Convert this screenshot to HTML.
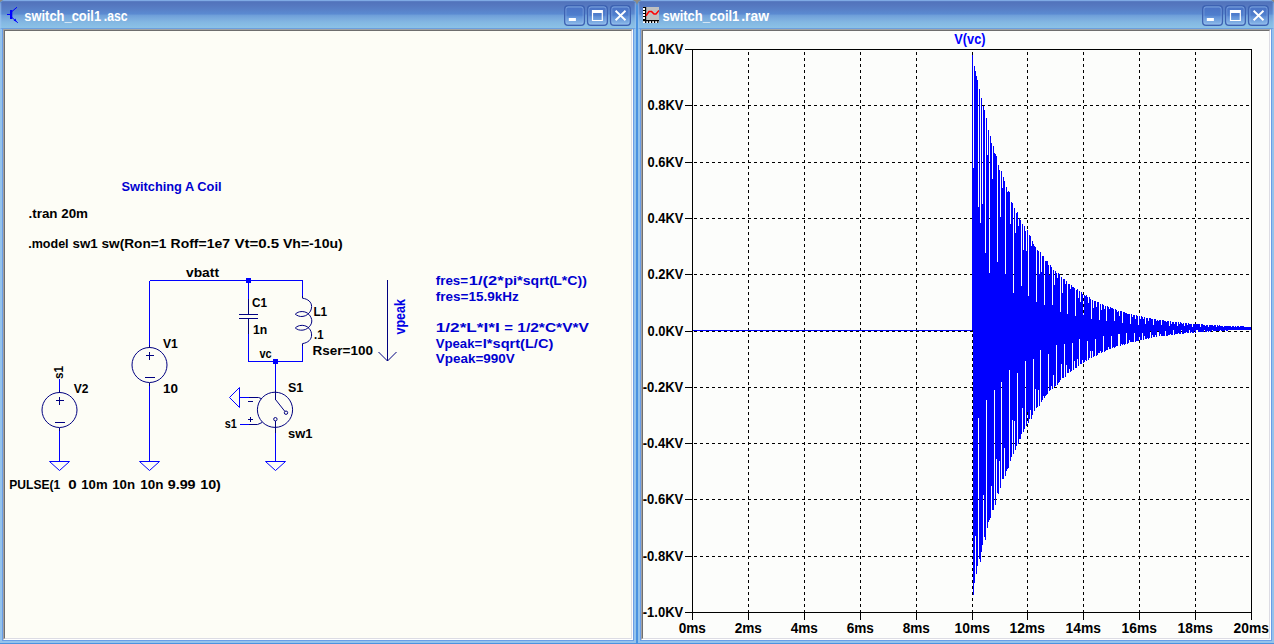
<!DOCTYPE html>
<html><head><meta charset="utf-8"><title>LTspice - switch_coil1</title>
<style>
html,body{margin:0;padding:0;}
body{width:1274px;height:644px;overflow:hidden;background:#8c8a86;position:relative;font-family:"Liberation Sans", sans-serif;}
.win{position:absolute;top:0;height:644px;width:638px;box-sizing:border-box;background:#94c3ec;border:1px solid #4a92e0;border-top:0;border-radius:6px 6px 0 0;overflow:hidden;}
.tb{position:absolute;left:0;right:0;top:0;height:29px;background:linear-gradient(to bottom,#7faae4 0,#7faae4 1px,#5273bb 1.6px,#5577bf 5px,#587fc6 9px,#5b8bd2 14.2px,#6d9dd8 14.9px,#78a9dd 18px,#83b7e2 22px,#8bc1e6 27.5px,#6c9fde 28.2px,#6c9fde 29px);}
.tb::after{content:"";position:absolute;left:0;right:0;top:3px;bottom:0;box-shadow:inset 1.3px 0 0 rgba(160,200,245,.55),inset -1.3px 0 0 rgba(160,200,245,.55);}
.ico{position:absolute;}
.btns{position:absolute;top:5px;left:564.4px;}
.inner{position:absolute;left:2px;right:2px;top:29px;bottom:2px;box-sizing:border-box;border:1px solid #6a9de6;border-top:0;}
.edge{position:absolute;left:0;top:0;right:0;bottom:0;box-sizing:border-box;border-style:solid;border-width:1px;border-color:#a3a3a3 #fff #fff #a3a3a3;}
.edge>div{position:absolute;left:0;top:0;right:0;bottom:0;box-sizing:border-box;border-style:solid;border-width:1px;border-color:#6e6e6e #dcdce4 #dcdce4 #6e6e6e;}
svg.layer{position:absolute;left:0;top:0;}
svg text{font-family:"Liberation Sans", sans-serif;}
</style></head><body>
<div class="win" style="left:-1px"><div class="tb"><svg class="ico" width="16" height="18" viewBox="0 0 16 18" style="left:4px;top:6px"><path d="M3 8.5H6.5" stroke="#00f" stroke-width="1"/><rect x="6" y="4" width="2.3" height="9" fill="#00f"/><path d="M8 5.5L13 1.2M8 11.5L13.8 16.8" stroke="#00f" stroke-width="1"/><path d="M12.5 15.8L9.6 14.4L11.6 12.6Z" fill="#00f"/></svg><svg class="btns" width="67" height="22" viewBox="0 0 67 22"><defs><linearGradient id="bg1" x1="0" y1="0" x2="0" y2="1"><stop offset="0" stop-color="#6c97d9"/><stop offset=".14" stop-color="#4b74c6"/><stop offset=".48" stop-color="#4f7ecd"/><stop offset=".56" stop-color="#6090d7"/><stop offset="1" stop-color="#8fbdea"/></linearGradient></defs><rect x="0.7" y=".7" width="19.7" height="19.6" rx="3.4" fill="url(#bg1)" stroke="#3d62b2" stroke-width="1.4"/><rect x="1.9" y="1.9" width="17.3" height="17.2" rx="2.3" fill="none" stroke="#a6c8f2" stroke-opacity=".45" stroke-width=".9"/><rect x="23.6" y=".7" width="19.7" height="19.6" rx="3.4" fill="url(#bg1)" stroke="#3d62b2" stroke-width="1.4"/><rect x="24.8" y="1.9" width="17.3" height="17.2" rx="2.3" fill="none" stroke="#a6c8f2" stroke-opacity=".45" stroke-width=".9"/><rect x="46.6" y=".7" width="19.7" height="19.6" rx="3.4" fill="url(#bg1)" stroke="#3d62b2" stroke-width="1.4"/><rect x="47.8" y="1.9" width="17.3" height="17.2" rx="2.3" fill="none" stroke="#a6c8f2" stroke-opacity=".45" stroke-width=".9"/><rect x="4.8" y="13" width="7.1" height="3" fill="#fff"/><path d="M27.9 5H38.9V16H27.9Z M29.1 8V14.9H37.7V8Z" fill="#fff" fill-rule="evenodd"/><path d="M51.6 5.7L61.5 15.3M61.5 5.7L51.6 15.3" stroke="#fff" stroke-width="1.9" fill="none"/></svg></div><div class="inner"><div class="edge"><div style="background:#fdfdf6"></div></div></div></div>
<div class="win" style="left:637px"><div class="tb"><svg class="ico" width="16" height="16" viewBox="0 0 16 16" style="left:5px;top:7px"><rect x="0" y="0" width="16" height="16" fill="#fff"/><rect x="3" y="0" width="13" height="13" fill="#c0c0c0"/><rect x="2" y="0" width="1.2" height="16" fill="#000"/><rect x="0" y="13" width="16" height="1.2" fill="#000"/><path d="M0 0.5H2M0 3.5H2M0 6.5H2M0 9.5H2M0 12.5H2" stroke="#000" stroke-width="1.2"/><path d="M2.6 14V16M5.6 14V16M8.6 14V16M11.6 14V16M14.8 14V16" stroke="#000" stroke-width="1.2"/><path d="M3 8.8L6 4.6H8.6L11 7H13L16 3.4" stroke="#f00" stroke-width="1.5" fill="none"/></svg><svg class="btns" width="67" height="22" viewBox="0 0 67 22"><defs><linearGradient id="bg2" x1="0" y1="0" x2="0" y2="1"><stop offset="0" stop-color="#6c97d9"/><stop offset=".14" stop-color="#4b74c6"/><stop offset=".48" stop-color="#4f7ecd"/><stop offset=".56" stop-color="#6090d7"/><stop offset="1" stop-color="#8fbdea"/></linearGradient></defs><rect x="0.7" y=".7" width="19.7" height="19.6" rx="3.4" fill="url(#bg2)" stroke="#3d62b2" stroke-width="1.4"/><rect x="1.9" y="1.9" width="17.3" height="17.2" rx="2.3" fill="none" stroke="#a6c8f2" stroke-opacity=".45" stroke-width=".9"/><rect x="23.6" y=".7" width="19.7" height="19.6" rx="3.4" fill="url(#bg2)" stroke="#3d62b2" stroke-width="1.4"/><rect x="24.8" y="1.9" width="17.3" height="17.2" rx="2.3" fill="none" stroke="#a6c8f2" stroke-opacity=".45" stroke-width=".9"/><rect x="46.6" y=".7" width="19.7" height="19.6" rx="3.4" fill="url(#bg2)" stroke="#3d62b2" stroke-width="1.4"/><rect x="47.8" y="1.9" width="17.3" height="17.2" rx="2.3" fill="none" stroke="#a6c8f2" stroke-opacity=".45" stroke-width=".9"/><rect x="4.8" y="13" width="7.1" height="3" fill="#fff"/><path d="M27.9 5H38.9V16H27.9Z M29.1 8V14.9H37.7V8Z" fill="#fff" fill-rule="evenodd"/><path d="M51.6 5.7L61.5 15.3M61.5 5.7L51.6 15.3" stroke="#fff" stroke-width="1.9" fill="none"/></svg></div><div class="inner"><div class="edge"><div style="background:#fcfdfb"></div></div></div></div>
<svg class="layer" width="1274" height="644" viewBox="0 0 1274 644">
<text y="20.8" font-size="14" font-weight="bold" fill="#fff"><tspan x="24.3" textLength="76.8" lengthAdjust="spacingAndGlyphs">switch_coil1</tspan><tspan x="103.8" textLength="23.7" lengthAdjust="spacingAndGlyphs">.asc</tspan></text>
<text y="20.8" font-size="14" font-weight="bold" fill="#fff"><tspan x="662.5" textLength="76.8" lengthAdjust="spacingAndGlyphs">switch_coil1</tspan><tspan x="741.2" textLength="27.8" lengthAdjust="spacingAndGlyphs">.raw</tspan></text>
<g shape-rendering="crispEdges">
<line x1="149.5" y1="280.5" x2="302.5" y2="280.5" stroke="#0000ff" stroke-width="1"/>
<line x1="149.5" y1="280.5" x2="149.5" y2="344.5" stroke="#0000ff" stroke-width="1"/>
<line x1="149.5" y1="344.5" x2="149.5" y2="347.5" stroke="#000080" stroke-width="1"/>
<line x1="149.5" y1="382.5" x2="149.5" y2="385.5" stroke="#000080" stroke-width="1"/>
<line x1="149.5" y1="385.5" x2="149.5" y2="461" stroke="#0000ff" stroke-width="1"/>
<line x1="145.5" y1="355.5" x2="153.5" y2="355.5" stroke="#000080" stroke-width="1"/>
<line x1="149.5" y1="351.5" x2="149.5" y2="359.5" stroke="#000080" stroke-width="1"/>
<line x1="144.5" y1="377.5" x2="154.5" y2="377.5" stroke="#000080" stroke-width="1"/>
<line x1="59.5" y1="379" x2="59.5" y2="389.5" stroke="#0000ff" stroke-width="1"/>
<line x1="59.5" y1="389.5" x2="59.5" y2="392.5" stroke="#000080" stroke-width="1"/>
<line x1="59.5" y1="427.5" x2="59.5" y2="430.5" stroke="#000080" stroke-width="1"/>
<line x1="59.5" y1="430.5" x2="59.5" y2="461" stroke="#0000ff" stroke-width="1"/>
<line x1="55.5" y1="400.5" x2="63.5" y2="400.5" stroke="#000080" stroke-width="1"/>
<line x1="59.5" y1="396.5" x2="59.5" y2="404.5" stroke="#000080" stroke-width="1"/>
<line x1="54.5" y1="422.5" x2="64.5" y2="422.5" stroke="#000080" stroke-width="1"/>
<line x1="248.5" y1="280.5" x2="248.5" y2="299" stroke="#0000ff" stroke-width="1"/>
<line x1="248.5" y1="299" x2="248.5" y2="314.5" stroke="#000080" stroke-width="1"/>
<line x1="239" y1="314.5" x2="258" y2="314.5" stroke="#000080" stroke-width="1"/>
<line x1="239" y1="318.5" x2="258" y2="318.5" stroke="#000080" stroke-width="1"/>
<line x1="248.5" y1="318.5" x2="248.5" y2="334" stroke="#000080" stroke-width="1"/>
<line x1="248.5" y1="334" x2="248.5" y2="361.5" stroke="#0000ff" stroke-width="1"/>
<line x1="248.5" y1="361.5" x2="302.5" y2="361.5" stroke="#0000ff" stroke-width="1"/>
<line x1="302.5" y1="280.5" x2="302.5" y2="296" stroke="#0000ff" stroke-width="1"/>
<line x1="302.5" y1="346" x2="302.5" y2="361.5" stroke="#0000ff" stroke-width="1"/>
<line x1="275.5" y1="361.5" x2="275.5" y2="389.5" stroke="#0000ff" stroke-width="1"/>
<line x1="275.5" y1="389.5" x2="275.5" y2="399.5" stroke="#000080" stroke-width="1"/>
<line x1="275.5" y1="421" x2="275.5" y2="432.5" stroke="#000080" stroke-width="1"/>
<line x1="275.5" y1="432.5" x2="275.5" y2="461" stroke="#0000ff" stroke-width="1"/>
<line x1="239.5" y1="397.5" x2="249" y2="397.5" stroke="#0000ff" stroke-width="1"/>
<line x1="239.5" y1="424.5" x2="249" y2="424.5" stroke="#0000ff" stroke-width="1"/>
<line x1="248" y1="401.5" x2="253" y2="401.5" stroke="#000080" stroke-width="1"/>
<line x1="248" y1="419.5" x2="253" y2="419.5" stroke="#000080" stroke-width="1"/>
<line x1="250.5" y1="417" x2="250.5" y2="422" stroke="#000080" stroke-width="1"/>
<line x1="387.5" y1="280" x2="387.5" y2="361" stroke="#000080" stroke-width="1"/>
</g>
<g>
<circle cx="149.5" cy="365" r="17.5" stroke="#000080" stroke-width="1" fill="none"/>
<path d="M139.5 461.5H159.5L149.5 470.5Z" stroke="#0000ff" stroke-width="1" fill="none"/>
<circle cx="59.5" cy="410" r="17.5" stroke="#000080" stroke-width="1" fill="none"/>
<path d="M49.5 461.5H69.5L59.5 470.5Z" stroke="#0000ff" stroke-width="1" fill="none"/>
<rect x="246.0" y="278.0" width="5" height="5" fill="#0000ff"/>
<rect x="273.0" y="359.0" width="5" height="5" fill="#0000ff"/>
<path d="M302.5 296V298.2C308 299 311.6 302 311.6 306.5C311.6 310 310 312.5 307.5 314.5C305 316.5 301 317 298.5 316C297 315.4 296 314.8 295.3 314.2C296 313.4 297.5 312.4 299.5 311.8C303 311 307 312 309 314.5C310.8 316.5 311.8 318.8 311.8 321C311.8 324 310 326.5 307.5 328.3C305 330.3 301 330.6 298.5 329.8C297 329.2 296 328.6 295.3 328C296 327.2 297.5 326.2 299.5 325.6C303 324.8 307 325.8 309 328.3C310.8 330.3 311.6 332.5 311.6 335C311.6 339.5 308 342.8 302.5 343.6V346" stroke="#000080" stroke-width="1" fill="none"/>
<circle cx="275" cy="409.8" r="17.6" stroke="#000080" stroke-width="1" fill="none"/>
<path d="M275.5 399.5L284.8 411.3" stroke="#000080" stroke-width="1" fill="none"/>
<circle cx="286" cy="412.7" r="1.7" stroke="#000080" stroke-width="1" fill="none"/>
<circle cx="275.4" cy="419.2" r="1.7" stroke="#000080" stroke-width="1" fill="none"/>
<path d="M265.5 461.5H285.5L275.5 470.5Z" stroke="#0000ff" stroke-width="1" fill="none"/>
<path d="M249 397.5H258.5L261.8 398.8" stroke="#000080" stroke-width="1" fill="none"/>
<path d="M239.5 387.5V407.5L229.5 397.5Z" stroke="#0000ff" stroke-width="1" fill="none"/>
<path d="M249 424.5H257.6L262.3 422.4" stroke="#000080" stroke-width="1" fill="none"/>
<path d="M378.5 352 L387.5 361 L396.5 352" stroke="#000080" stroke-width="1" fill="none"/>
</g>
<g>
<text x="121.5" y="190.5" font-size="12.8" font-weight="bold" fill="#0000d0" textLength="100.0" lengthAdjust="spacingAndGlyphs" xml:space="preserve">Switching A Coil</text>
<text x="28.5" y="217.5" font-size="12.8" font-weight="bold" fill="#000" textLength="59.5" lengthAdjust="spacingAndGlyphs" xml:space="preserve">.tran 20m</text>
<text y="248.3" font-size="12.8" font-weight="bold" fill="#000"><tspan x="28.2" textLength="40.4" lengthAdjust="spacingAndGlyphs">.model</tspan> <tspan x="72.5" textLength="25.2" lengthAdjust="spacingAndGlyphs">sw1</tspan> <tspan x="101.5" textLength="64.8" lengthAdjust="spacingAndGlyphs">sw(Ron=1</tspan> <tspan x="170.6" textLength="59.4" lengthAdjust="spacingAndGlyphs">Roff=1e7</tspan> <tspan x="234.4" textLength="44.8" lengthAdjust="spacingAndGlyphs">Vt=0.5</tspan> <tspan x="282.9" textLength="59.9" lengthAdjust="spacingAndGlyphs">Vh=-10u)</tspan></text>
<text x="186.0" y="276.8" font-size="12.8" font-weight="bold" fill="#000" textLength="33.0" lengthAdjust="spacingAndGlyphs" xml:space="preserve">vbatt</text>
<text x="252.0" y="306.5" font-size="12.8" font-weight="bold" fill="#000" textLength="15.0" lengthAdjust="spacingAndGlyphs" xml:space="preserve">C1</text>
<text x="253.0" y="333.5" font-size="12.8" font-weight="bold" fill="#000" textLength="14.3" lengthAdjust="spacingAndGlyphs" xml:space="preserve">1n</text>
<text x="313.4" y="315.6" font-size="12.8" font-weight="bold" fill="#000" textLength="13.8" lengthAdjust="spacingAndGlyphs" xml:space="preserve">L1</text>
<text x="314.0" y="338.8" font-size="12.8" font-weight="bold" fill="#000" textLength="9.5" lengthAdjust="spacingAndGlyphs" xml:space="preserve">.1</text>
<text x="312.6" y="354.6" font-size="12.8" font-weight="bold" fill="#000" textLength="60.4" lengthAdjust="spacingAndGlyphs" xml:space="preserve">Rser=100</text>
<text x="259.4" y="357.7" font-size="12.8" font-weight="bold" fill="#000" textLength="12.2" lengthAdjust="spacingAndGlyphs" xml:space="preserve">vc</text>
<text x="163.0" y="348.0" font-size="12.8" font-weight="bold" fill="#000" textLength="14.8" lengthAdjust="spacingAndGlyphs" xml:space="preserve">V1</text>
<text x="163.0" y="392.7" font-size="12.8" font-weight="bold" fill="#000" textLength="15.0" lengthAdjust="spacingAndGlyphs" xml:space="preserve">10</text>
<text x="73.8" y="393.0" font-size="12.8" font-weight="bold" fill="#000" textLength="14.7" lengthAdjust="spacingAndGlyphs" xml:space="preserve">V2</text>
<text x="288.0" y="392.4" font-size="12.8" font-weight="bold" fill="#000" textLength="15.3" lengthAdjust="spacingAndGlyphs" xml:space="preserve">S1</text>
<text x="288.0" y="437.9" font-size="12.8" font-weight="bold" fill="#000" textLength="24.4" lengthAdjust="spacingAndGlyphs" xml:space="preserve">sw1</text>
<text x="224.7" y="428.4" font-size="12.8" font-weight="bold" fill="#000" textLength="12.1" lengthAdjust="spacingAndGlyphs" xml:space="preserve">s1</text>
<text y="488.5" font-size="12.8" font-weight="bold" fill="#000"><tspan x="9.3" textLength="50.9" lengthAdjust="spacingAndGlyphs">PULSE(1</tspan>  <tspan x="68.3" textLength="8.4" lengthAdjust="spacingAndGlyphs">0</tspan> <tspan x="81.3" textLength="26.3" lengthAdjust="spacingAndGlyphs">10m</tspan> <tspan x="112.2" textLength="22.9" lengthAdjust="spacingAndGlyphs">10n</tspan> <tspan x="140.2" textLength="23.2" lengthAdjust="spacingAndGlyphs">10n</tspan> <tspan x="167.7" textLength="27.9" lengthAdjust="spacingAndGlyphs">9.99</tspan> <tspan x="200.2" textLength="20.7" lengthAdjust="spacingAndGlyphs">10)</tspan></text>
<g transform="translate(63,379) rotate(-90)"><text x="0.0" y="0.0" font-size="12.8" font-weight="bold" fill="#000" textLength="13.0" lengthAdjust="spacingAndGlyphs" xml:space="preserve">s1</text></g>
<g transform="translate(404.5,334.5) rotate(-90)"><text x="0.0" y="0.0" font-size="14.2" font-weight="bold" fill="#0000e6" textLength="35.5" lengthAdjust="spacingAndGlyphs" xml:space="preserve">vpeak</text></g>
<text y="285.0" font-size="12.8" font-weight="bold" fill="#0000d0"><tspan x="435.8" textLength="32.3" lengthAdjust="spacingAndGlyphs">fres=</tspan><tspan x="468.8" textLength="34.8" lengthAdjust="spacingAndGlyphs">1/(2*</tspan><tspan x="504.2" textLength="18.6" lengthAdjust="spacingAndGlyphs">pi*</tspan><tspan x="522.8" textLength="31.1" lengthAdjust="spacingAndGlyphs">sqrt(</tspan><tspan x="553.2" textLength="33.7" lengthAdjust="spacingAndGlyphs">L*C))</tspan></text>
<text y="300.8" font-size="12.8" font-weight="bold" fill="#0000d0"><tspan x="435.8" textLength="83.0" lengthAdjust="spacingAndGlyphs">fres=15.9kHz</tspan></text>
<text y="331.8" font-size="12.8" font-weight="bold" fill="#0000d0"><tspan x="435.8" textLength="64.0" lengthAdjust="spacingAndGlyphs">1/2*L*I*I</tspan> <tspan x="504.2" textLength="8.7" lengthAdjust="spacingAndGlyphs">=</tspan> <tspan x="517.3" textLength="71.6" lengthAdjust="spacingAndGlyphs">1/2*C*V*V</tspan></text>
<text y="347.6" font-size="12.8" font-weight="bold" fill="#0000d0"><tspan x="435.8" textLength="46.3" lengthAdjust="spacingAndGlyphs">Vpeak=</tspan><tspan x="482.8" textLength="70.5" lengthAdjust="spacingAndGlyphs">I*sqrt(L/C)</tspan></text>
<text y="363.4" font-size="12.8" font-weight="bold" fill="#0000d0"><tspan x="435.8" textLength="78.9" lengthAdjust="spacingAndGlyphs">Vpeak=990V</tspan></text>
</g>
<g shape-rendering="crispEdges">
<line x1="748.5" y1="50" x2="748.5" y2="612" stroke="#000" stroke-width="1" stroke-dasharray="3 3" stroke-dashoffset="-2"/>
<line x1="804.5" y1="50" x2="804.5" y2="612" stroke="#000" stroke-width="1" stroke-dasharray="3 3" stroke-dashoffset="-2"/>
<line x1="860.5" y1="50" x2="860.5" y2="612" stroke="#000" stroke-width="1" stroke-dasharray="3 3" stroke-dashoffset="-2"/>
<line x1="916.5" y1="50" x2="916.5" y2="612" stroke="#000" stroke-width="1" stroke-dasharray="3 3" stroke-dashoffset="-2"/>
<line x1="972.5" y1="50" x2="972.5" y2="612" stroke="#000" stroke-width="1" stroke-dasharray="3 3" stroke-dashoffset="-2"/>
<line x1="1027.5" y1="50" x2="1027.5" y2="612" stroke="#000" stroke-width="1" stroke-dasharray="3 3" stroke-dashoffset="-2"/>
<line x1="1083.5" y1="50" x2="1083.5" y2="612" stroke="#000" stroke-width="1" stroke-dasharray="3 3" stroke-dashoffset="-2"/>
<line x1="1139.5" y1="50" x2="1139.5" y2="612" stroke="#000" stroke-width="1" stroke-dasharray="3 3" stroke-dashoffset="-2"/>
<line x1="1195.5" y1="50" x2="1195.5" y2="612" stroke="#000" stroke-width="1" stroke-dasharray="3 3" stroke-dashoffset="-2"/>
<line x1="693" y1="105.5" x2="1251" y2="105.5" stroke="#000" stroke-width="1" stroke-dasharray="3 3" stroke-dashoffset="-1"/>
<line x1="693" y1="162.5" x2="1251" y2="162.5" stroke="#000" stroke-width="1" stroke-dasharray="3 3" stroke-dashoffset="-1"/>
<line x1="693" y1="218.5" x2="1251" y2="218.5" stroke="#000" stroke-width="1" stroke-dasharray="3 3" stroke-dashoffset="-1"/>
<line x1="693" y1="274.5" x2="1251" y2="274.5" stroke="#000" stroke-width="1" stroke-dasharray="3 3" stroke-dashoffset="-1"/>
<line x1="693" y1="331.5" x2="1251" y2="331.5" stroke="#000" stroke-width="1" stroke-dasharray="3 3" stroke-dashoffset="-1"/>
<line x1="693" y1="387.5" x2="1251" y2="387.5" stroke="#000" stroke-width="1" stroke-dasharray="3 3" stroke-dashoffset="-1"/>
<line x1="693" y1="443.5" x2="1251" y2="443.5" stroke="#000" stroke-width="1" stroke-dasharray="3 3" stroke-dashoffset="-1"/>
<line x1="693" y1="499.5" x2="1251" y2="499.5" stroke="#000" stroke-width="1" stroke-dasharray="3 3" stroke-dashoffset="-1"/>
<line x1="693" y1="556.5" x2="1251" y2="556.5" stroke="#000" stroke-width="1" stroke-dasharray="3 3" stroke-dashoffset="-1"/>
<path d="M972.5 54.6V329.7M973.5 168.0V595.2M974.5 66.1V582.8M975.5 70.9V535.8M976.5 75.6V574.3M977.5 80.3V566.0M978.5 206.5V418.1M979.5 89.3V558.8M980.5 222.7V562.2M981.5 98.0V552.2M982.5 203.9V544.5M983.5 106.3V495.1M984.5 110.4V537.4M985.5 253.4V540.2M986.5 118.3V399.5M987.5 155.2V528.4M988.5 130.1V521.9M989.5 273.2V519.6M990.5 136.1V518.1M991.5 142.8V486.3M992.5 179.2V510.1M993.5 145.5V510.1M994.5 153.4V389.5M995.5 154.3V504.9M996.5 155.9V459.3M997.5 261.8V492.6M998.5 164.5V494.4M999.5 169.5V460.6M1000.5 216.5V487.7M1001.5 170.9V382.1M1002.5 187.9V479.4M1003.5 177.1V478.6M1004.5 180.7V447.6M1005.5 273.5V475.5M1006.5 186.7V470.9M1007.5 192.0V468.5M1008.5 190.8V467.8M1009.5 192.2V369.9M1010.5 223.7V460.8M1011.5 201.9V457.1M1012.5 203.4V420.2M1013.5 292.9V454.2M1014.5 208.1V420.9M1015.5 232.8V450.2M1016.5 212.8V445.6M1017.5 212.4V372.6M1018.5 225.5V443.5M1019.5 218.0V439.1M1020.5 219.6V439.4M1021.5 285.9V433.8M1022.5 224.4V407.7M1023.5 250.1V431.5M1024.5 226.3V428.6M1025.5 230.8V360.8M1026.5 250.9V426.3M1027.5 230.2V412.0M1028.5 296.2V423.0M1029.5 234.9V418.8M1030.5 235.7V409.5M1031.5 246.2V418.6M1032.5 241.1V415.3M1033.5 243.8V358.6M1034.5 245.6V410.9M1035.5 246.5V389.2M1036.5 302.4V407.8M1037.5 250.3V406.7M1038.5 251.3V390.0M1039.5 274.2V406.4M1040.5 252.3V350.4M1041.5 271.9V401.8M1042.5 255.9V399.7M1043.5 255.7V396.0M1044.5 304.8V398.2M1045.5 260.7V395.7M1046.5 261.2V395.0M1047.5 260.9V393.5M1048.5 264.5V353.8M1049.5 275.1V391.0M1050.5 265.4V389.5M1051.5 266.6V386.4M1052.5 305.1V389.2M1053.5 269.5V375.0M1054.5 285.2V387.2M1055.5 270.9V386.1M1056.5 272.5V345.2M1057.5 278.4V384.5M1058.5 273.2V383.0M1059.5 274.3V381.9M1060.5 312.4V380.4M1061.5 277.4V364.2M1062.5 292.9V377.9M1063.5 279.4V377.9M1064.5 278.8V344.2M1065.5 283.8V376.8M1066.5 280.6V365.0M1067.5 314.3V373.4M1068.5 283.9V372.5M1069.5 283.8V369.0M1070.5 288.8V371.5M1071.5 285.4V371.3M1072.5 287.3V343.1M1073.5 286.5V369.7M1074.5 287.5V361.1M1075.5 316.4V368.2M1076.5 289.7V367.5M1077.5 289.3V358.5M1078.5 298.4V366.3M1079.5 291.2V339.1M1080.5 302.0V363.6M1081.5 292.2V364.0M1082.5 294.1V359.7M1083.5 314.7V362.5M1084.5 295.0V361.7M1085.5 296.0V360.3M1086.5 295.3V360.6M1087.5 296.6V340.6M1088.5 303.2V359.8M1089.5 297.3V358.3M1090.5 298.6V351.2M1091.5 319.2V357.7M1092.5 299.7V351.3M1093.5 307.6V357.0M1094.5 300.6V355.9M1095.5 300.8V338.8M1096.5 306.7V355.5M1097.5 301.9V354.5M1098.5 302.4V353.4M1099.5 319.8V353.1M1100.5 303.9V350.6M1101.5 310.2V352.6M1102.5 304.0V352.2M1103.5 304.9V336.2M1104.5 308.9V351.6M1105.5 306.0V350.9M1106.5 321.4V350.2M1107.5 306.1V350.0M1108.5 306.7V347.3M1109.5 308.7V349.2M1110.5 307.4V348.9M1111.5 307.9V335.5M1112.5 308.3V348.1M1113.5 308.7V346.5M1114.5 321.3V347.7M1115.5 309.0V346.8M1116.5 309.7V345.5M1117.5 311.7V346.0M1118.5 310.7V334.1M1119.5 315.7V333.5M1120.5 311.4V345.5M1121.5 311.1V343.8M1122.5 323.3V344.9M1123.5 311.9V344.2M1124.5 312.0V344.5M1125.5 312.8V344.2M1126.5 312.9V333.4M1127.5 313.9V343.5M1128.5 313.6V342.9M1129.5 313.7V339.6M1130.5 323.9V342.3M1131.5 314.1V341.9M1132.5 316.7V341.9M1133.5 315.0V341.6M1134.5 314.9V332.7M1135.5 318.9V341.5M1136.5 315.3V341.2M1137.5 315.9V340.6M1138.5 324.7V340.7M1139.5 316.3V337.0M1140.5 318.7V340.3M1141.5 316.4V339.7M1142.5 317.0V332.6M1143.5 318.8V339.5M1144.5 317.4V336.0M1145.5 324.3V339.0M1146.5 317.8V339.0M1147.5 317.7V337.6M1148.5 320.9V338.6M1149.5 318.4V338.4M1150.5 318.4V331.3M1151.5 318.5V338.1M1152.5 318.8V335.1M1153.5 325.0V337.4M1154.5 319.2V337.2M1155.5 319.4V334.9M1156.5 321.4V336.9M1157.5 319.5V330.9M1158.5 321.2V330.7M1159.5 319.9V336.3M1160.5 320.1V333.9M1161.5 325.3V336.2M1162.5 320.4V336.1M1163.5 320.3V335.8M1164.5 320.5V335.8M1165.5 320.7V331.0M1166.5 322.4V335.5M1167.5 321.0V335.5M1168.5 321.2V334.6M1169.5 325.7V335.2M1170.5 321.4V333.5M1171.5 323.5V334.8M1172.5 321.8V334.8M1173.5 321.8V330.1M1174.5 323.7V334.6M1175.5 321.9V334.4M1176.5 322.2V334.2M1177.5 326.3V334.2M1178.5 322.4V332.9M1179.5 323.8V334.1M1180.5 322.4V333.9M1181.5 322.7V330.4M1182.5 324.0V333.6M1183.5 323.0V333.5M1184.5 326.4V333.4M1185.5 323.1V333.3M1186.5 323.3V332.1M1187.5 324.6V333.1M1188.5 323.4V333.0M1189.5 323.5V329.7M1190.5 323.5V332.9M1191.5 323.5V332.2M1192.5 326.6V332.8M1193.5 323.8V332.6M1194.5 323.7V331.4M1195.5 324.4V332.5M1196.5 324.1V329.8M1197.5 324.4V329.7M1198.5 324.1V332.3M1199.5 324.3V331.5M1200.5 326.7V332.2M1201.5 324.3V332.1M1202.5 324.4V332.0M1203.5 324.5V331.9M1204.5 324.6V329.7M1205.5 325.6V331.7M1206.5 324.8V331.7M1207.5 324.8V331.1M1208.5 326.7V331.6M1209.5 324.9V331.4M1210.5 325.3V331.5M1211.5 325.0V331.4M1212.5 325.1V329.7M1213.5 325.5V331.2M1214.5 325.3V331.2M1215.5 325.2V331.1M1216.5 326.7V331.2M1217.5 325.4V330.5M1218.5 325.9V331.0M1219.5 325.4V331.0M1220.5 325.5V329.7M1221.5 326.3V330.8M1222.5 325.6V330.8M1223.5 326.7V330.7M1224.5 325.8V330.7M1225.5 325.7V330.3M1226.5 326.1V330.6M1227.5 325.8V330.6M1228.5 325.9V329.7M1229.5 325.9V330.4M1230.5 325.9V330.3M1231.5 326.7V330.4M1232.5 326.0V330.4M1233.5 326.1V329.8M1234.5 326.6V330.3M1235.5 326.2V329.7M1236.5 326.7V329.7M1237.5 326.2V330.1M1238.5 326.2V329.8M1239.5 326.7V330.1M1240.5 326.4V330.1M1241.5 326.4V330.0M1242.5 326.4V330.0M1243.5 326.4V329.7M1244.5 326.7V329.9M1245.5 326.5V329.9M1246.5 326.6V329.7M1247.5 326.7V329.8M1248.5 326.6V329.8M1249.5 326.7V329.8M1250.5 326.7V329.7" stroke="#0000ff" stroke-width="1" fill="none" shape-rendering="crispEdges"/>
<line x1="693" y1="330.5" x2="972" y2="330.5" stroke="#0000ff" stroke-width="1"/>
<rect x="692.5" y="49.5" width="559" height="563" fill="none" stroke="#000" stroke-width="1"/>
<line x1="685" y1="49.5" x2="692" y2="49.5" stroke="#000"/>
<line x1="692.5" y1="612" x2="692.5" y2="620" stroke="#000"/>
<line x1="685" y1="105.5" x2="692" y2="105.5" stroke="#000"/>
<line x1="748.5" y1="612" x2="748.5" y2="620" stroke="#000"/>
<line x1="685" y1="162.5" x2="692" y2="162.5" stroke="#000"/>
<line x1="804.5" y1="612" x2="804.5" y2="620" stroke="#000"/>
<line x1="685" y1="218.5" x2="692" y2="218.5" stroke="#000"/>
<line x1="860.5" y1="612" x2="860.5" y2="620" stroke="#000"/>
<line x1="685" y1="274.5" x2="692" y2="274.5" stroke="#000"/>
<line x1="916.5" y1="612" x2="916.5" y2="620" stroke="#000"/>
<line x1="685" y1="331.5" x2="692" y2="331.5" stroke="#000"/>
<line x1="972.5" y1="612" x2="972.5" y2="620" stroke="#000"/>
<line x1="685" y1="387.5" x2="692" y2="387.5" stroke="#000"/>
<line x1="1027.5" y1="612" x2="1027.5" y2="620" stroke="#000"/>
<line x1="685" y1="443.5" x2="692" y2="443.5" stroke="#000"/>
<line x1="1083.5" y1="612" x2="1083.5" y2="620" stroke="#000"/>
<line x1="685" y1="499.5" x2="692" y2="499.5" stroke="#000"/>
<line x1="1139.5" y1="612" x2="1139.5" y2="620" stroke="#000"/>
<line x1="685" y1="556.5" x2="692" y2="556.5" stroke="#000"/>
<line x1="1195.5" y1="612" x2="1195.5" y2="620" stroke="#000"/>
<line x1="685" y1="612.5" x2="692" y2="612.5" stroke="#000"/>
<line x1="1251.5" y1="612" x2="1251.5" y2="620" stroke="#000"/>
</g>
<g>
<text x="647.5" y="53.6" font-size="14.2" font-weight="bold" fill="#000" textLength="35.8" lengthAdjust="spacingAndGlyphs" xml:space="preserve">1.0KV</text>
<text x="647.5" y="109.6" font-size="14.2" font-weight="bold" fill="#000" textLength="35.8" lengthAdjust="spacingAndGlyphs" xml:space="preserve">0.8KV</text>
<text x="647.5" y="166.6" font-size="14.2" font-weight="bold" fill="#000" textLength="35.8" lengthAdjust="spacingAndGlyphs" xml:space="preserve">0.6KV</text>
<text x="647.5" y="222.6" font-size="14.2" font-weight="bold" fill="#000" textLength="35.8" lengthAdjust="spacingAndGlyphs" xml:space="preserve">0.4KV</text>
<text x="647.5" y="278.6" font-size="14.2" font-weight="bold" fill="#000" textLength="35.8" lengthAdjust="spacingAndGlyphs" xml:space="preserve">0.2KV</text>
<text x="647.5" y="335.6" font-size="14.2" font-weight="bold" fill="#000" textLength="35.8" lengthAdjust="spacingAndGlyphs" xml:space="preserve">0.0KV</text>
<text x="642.7" y="391.6" font-size="14.2" font-weight="bold" fill="#000" textLength="40.6" lengthAdjust="spacingAndGlyphs" xml:space="preserve">-0.2KV</text>
<text x="642.7" y="447.6" font-size="14.2" font-weight="bold" fill="#000" textLength="40.6" lengthAdjust="spacingAndGlyphs" xml:space="preserve">-0.4KV</text>
<text x="642.7" y="503.6" font-size="14.2" font-weight="bold" fill="#000" textLength="40.6" lengthAdjust="spacingAndGlyphs" xml:space="preserve">-0.6KV</text>
<text x="642.7" y="560.6" font-size="14.2" font-weight="bold" fill="#000" textLength="40.6" lengthAdjust="spacingAndGlyphs" xml:space="preserve">-0.8KV</text>
<text x="642.7" y="616.6" font-size="14.2" font-weight="bold" fill="#000" textLength="40.6" lengthAdjust="spacingAndGlyphs" xml:space="preserve">-1.0KV</text>
<text x="678.7" y="632.6" font-size="14.2" font-weight="bold" fill="#000" textLength="27.2" lengthAdjust="spacingAndGlyphs" xml:space="preserve">0ms</text>
<text x="734.7" y="632.6" font-size="14.2" font-weight="bold" fill="#000" textLength="27.2" lengthAdjust="spacingAndGlyphs" xml:space="preserve">2ms</text>
<text x="790.7" y="632.6" font-size="14.2" font-weight="bold" fill="#000" textLength="27.2" lengthAdjust="spacingAndGlyphs" xml:space="preserve">4ms</text>
<text x="846.7" y="632.6" font-size="14.2" font-weight="bold" fill="#000" textLength="27.2" lengthAdjust="spacingAndGlyphs" xml:space="preserve">6ms</text>
<text x="902.7" y="632.6" font-size="14.2" font-weight="bold" fill="#000" textLength="27.2" lengthAdjust="spacingAndGlyphs" xml:space="preserve">8ms</text>
<text x="954.6" y="632.6" font-size="14.2" font-weight="bold" fill="#000" textLength="35.4" lengthAdjust="spacingAndGlyphs" xml:space="preserve">10ms</text>
<text x="1009.6" y="632.6" font-size="14.2" font-weight="bold" fill="#000" textLength="35.4" lengthAdjust="spacingAndGlyphs" xml:space="preserve">12ms</text>
<text x="1065.6" y="632.6" font-size="14.2" font-weight="bold" fill="#000" textLength="35.4" lengthAdjust="spacingAndGlyphs" xml:space="preserve">14ms</text>
<text x="1121.6" y="632.6" font-size="14.2" font-weight="bold" fill="#000" textLength="35.4" lengthAdjust="spacingAndGlyphs" xml:space="preserve">16ms</text>
<text x="1177.6" y="632.6" font-size="14.2" font-weight="bold" fill="#000" textLength="35.4" lengthAdjust="spacingAndGlyphs" xml:space="preserve">18ms</text>
<text x="1233.6" y="632.6" font-size="14.2" font-weight="bold" fill="#000" textLength="35.4" lengthAdjust="spacingAndGlyphs" xml:space="preserve">20ms</text>
<text x="954.3" y="43.6" font-size="14.2" font-weight="bold" fill="#0000ff" textLength="31.2" lengthAdjust="spacingAndGlyphs" xml:space="preserve">V(vc)</text>
</g>
</svg>
</body></html>
